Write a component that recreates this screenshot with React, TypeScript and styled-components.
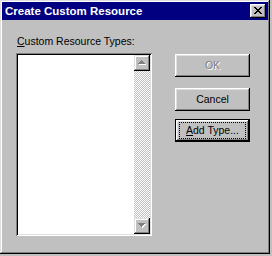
import styled, { createGlobalStyle } from 'styled-components'

const GlobalStyle = createGlobalStyle`
    html, body {
        margin: 0;
        padding: 0;
        background: #c0c0c0;
    }
    body {
        font-family: "Liberation Sans", Arial, sans-serif;
        width: 272px;
        height: 256px;
        overflow: hidden;
    }
`

// pixel X used on the title bar close button (8x7)
const closeRows = [
    [0, 1, 6, 7],
    [1, 2, 5, 6],
    [2, 3, 4, 5],
    [3, 4],
    [2, 3, 4, 5],
    [1, 2, 5, 6],
    [0, 1, 6, 7],
]

const CloseGlyph = () => (
    <svg width="8" height="7" viewBox="0 0 8 7" shapeRendering="crispEdges">
        {closeRows.map((row, y) =>
            row.map((x) => <rect key={`${x}-${y}`} x={x} y={y} width="1" height="1" fill="#000" />)
        )}
    </svg>
)

// disabled arrow: grey triangle with a white shadow one pixel down-right
const Arrow = ({ dir }: { dir: 'up' | 'down' }) => {
    const rows = [0, 1, 2, 3].map((i) => {
        const half = dir === 'up' ? i : 3 - i
        return { y: i, x: 3 - half, w: half * 2 + 1 }
    })
    return (
        <svg width="8" height="5" viewBox="0 0 8 5" shapeRendering="crispEdges">
            {rows.map((r) => (
                <rect key={`s${r.y}`} x={r.x + 1} y={r.y + 1} width={r.w} height="1" fill="#fff" />
            ))}
            {rows.map((r) => (
                <rect key={`a${r.y}`} x={r.x} y={r.y} width={r.w} height="1" fill="#808080" />
            ))}
        </svg>
    )
}

const App = () => {
    return (
        <>
            <GlobalStyle />
            <Window>
                <TitleBar>
                    <Title>Create Custom Resource</Title>
                    <CloseButton>
                        <CloseGlyph />
                    </CloseButton>
                </TitleBar>
                <Body>
                    <LeftColumn>
                        <Label><u>C</u>ustom Resource Types:</Label>
                        <ListBox>
                            <ScrollBar>
                                <ScrollButton><Arrow dir="up" /></ScrollButton>
                                <Track />
                                <ScrollButton><Arrow dir="down" /></ScrollButton>
                            </ScrollBar>
                        </ListBox>
                    </LeftColumn>
                    <ButtonColumn>
                        <PushButton $disabled $top={0}>OK</PushButton>
                        <PushButton $top={11}>Cancel</PushButton>
                        <PushButton $default $top={8}>
                            <FocusRing><u>A</u>dd Type...</FocusRing>
                        </PushButton>
                    </ButtonColumn>
                </Body>
            </Window>
        </>
    )
}

export default App

const Window = styled.div`
    width: 270px;
    height: 254px;
    box-sizing: border-box;
    padding: 2px;
    background: #c0c0c0;
    box-shadow: inset -1px -1px #000, inset 1px 1px #dfdfdf, inset -2px -2px #808080, inset 2px 2px #fff;
    display: flex;
    flex-direction: column;
`

const TitleBar = styled.div`
    height: 18px;
    flex-shrink: 0;
    background: #000080;
    display: flex;
    align-items: center;
    justify-content: space-between;
    padding: 0 2px 0 3px;
`

const Title = styled.span`
    color: #fff;
    font-weight: 700;
    font-size: 11.5px;
    line-height: 14px;
    white-space: nowrap;
`

const CloseButton = styled.div`
    width: 16px;
    height: 14px;
    box-sizing: border-box;
    background: #c0c0c0;
    box-shadow: inset -1px -1px #000, inset 1px 1px #fff, inset -2px -2px #808080, inset 2px 2px #dfdfdf;
    display: flex;
    align-items: center;
    justify-content: center;
    padding: 0 1px 1px 0;
`

const Body = styled.div`
    display: flex;
    padding: 15px 0 0 14px;
`

const LeftColumn = styled.div`
    display: flex;
    flex-direction: column;
`

const Label = styled.div`
    margin: 0 0 5px 1px;
    font-size: 10.5px;
    line-height: 13px;
    color: #000;
    white-space: nowrap;
`

const ListBox = styled.div`
    width: 136px;
    height: 183px;
    box-sizing: border-box;
    padding: 2px;
    background: #fff;
    box-shadow: inset 1px 1px #808080, inset -1px -1px #fff, inset 2px 2px #000, inset -2px -2px #dfdfdf;
    display: flex;
    justify-content: flex-end;
`

const ScrollBar = styled.div`
    width: 16px;
    display: flex;
    flex-direction: column;
`

const ScrollButton = styled.div`
    width: 16px;
    height: 16px;
    flex-shrink: 0;
    box-sizing: border-box;
    background: #c0c0c0;
    box-shadow: inset -1px -1px #000, inset 1px 1px #dfdfdf, inset -2px -2px #808080, inset 2px 2px #fff;
    display: flex;
    align-items: center;
    justify-content: center;
    padding: 0 0 1px 0;
`

const Track = styled.div`
    flex: 1;
    background-image: conic-gradient(#fff 0 25%, #c0c0c0 0 50%, #fff 0 75%, #c0c0c0 0);
    background-size: 2px 2px;
`

const ButtonColumn = styled.div`
    display: flex;
    flex-direction: column;
    margin-left: 23px;
    padding-top: 19px;
`

const PushButton = styled.div<{ $disabled?: boolean; $default?: boolean; $top: number }>`
    width: 75px;
    height: 23px;
    margin-top: ${(p) => p.$top}px;
    box-sizing: border-box;
    background: #c0c0c0;
    display: flex;
    align-items: stretch;
    justify-content: center;
    font-size: 10.5px;
    line-height: 23px;
    text-align: center;
    color: ${(p) => (p.$disabled ? '#808080' : '#000')};
    text-shadow: ${(p) => (p.$disabled ? '1px 1px #fff' : 'none')};
    box-shadow: ${(p) =>
        p.$default
            ? 'inset 0 0 0 1px #000, inset -2px -2px #000, inset 2px 2px #fff, inset -3px -3px #808080, inset 3px 3px #dfdfdf'
            : 'inset -1px -1px #000, inset 1px 1px #fff, inset -2px -2px #808080, inset 2px 2px #dfdfdf'};
`

const FocusRing = styled.span`
    flex: 1;
    margin: 3px 4px;
    border: 1px dotted #000;
    line-height: 15px;
    text-align: center;
`
